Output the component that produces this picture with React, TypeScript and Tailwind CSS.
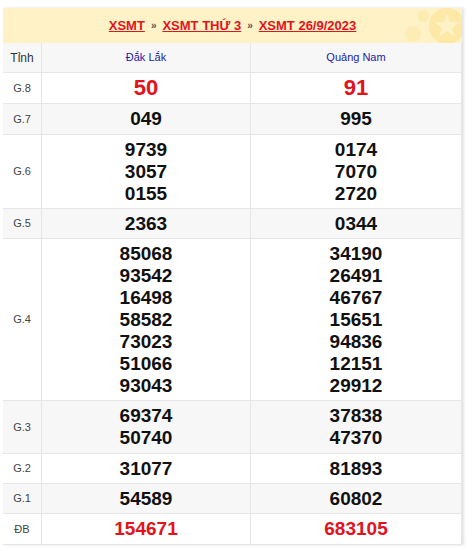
import React from "react"

type Row = { label: string; a: string[]; b: string[]; red?: boolean; big?: boolean; tall?: boolean }

const ROWS: Row[] = [
  { label: "G.8", a: ["50"], b: ["91"], red: true, big: true, tall: true },
  { label: "G.7", a: ["049"], b: ["995"], tall: true },
  { label: "G.6", a: ["9739", "3057", "0155"], b: ["0174", "7070", "2720"] },
  { label: "G.5", a: ["2363"], b: ["0344"] },
  {
    label: "G.4",
    a: ["85068", "93542", "16498", "58582", "73023", "51066", "93043"],
    b: ["34190", "26491", "46767", "15651", "94836", "12151", "29912"],
  },
  { label: "G.3", a: ["69374", "50740"], b: ["37838", "47370"], tall: true },
  { label: "G.2", a: ["31077"], b: ["81893"] },
  { label: "G.1", a: ["54589"], b: ["60802"] },
  { label: "ĐB", a: ["154671"], b: ["683105"], red: true, tall: true },
]

function Cell({ nums, red, big, tall }: { nums: string[]; red?: boolean; big?: boolean; tall?: boolean }) {
  return (
    <div
      className={
        "flex flex-col items-center justify-center border-l border-[#e6e6e6] pt-1 font-bold leading-[22px] " +
        (tall ? "pb-1 " : "pb-[3px] ") +
        (red ? "text-[#e3121b] " : "text-[#111] ") +
        (big ? "text-[22px]" : "text-[19px]")
      }
    >
      {nums.map((n, i) => (
        <span key={i}>{n}</span>
      ))}
    </div>
  )
}

function HeaderStar() {
  return (
    <svg className="absolute top-0 right-0" width="70" height="35" viewBox="0 0 70 35">
      <circle cx="55" cy="18" r="18" fill="#fde49a" opacity="0.75" />
      <polygon
        points="55,5 58,14 67,14 60,20 63,29 55,23 47,29 50,20 43,14 52,14"
        fill="#fff3cf"
        opacity="0.85"
      />
      <circle cx="31" cy="8" r="6" fill="#fde49a" opacity="0.45" />
      <circle cx="21" cy="26" r="8" fill="#fde49a" opacity="0.4" />
    </svg>
  )
}

export default function App() {
  return (
    <div
      className="h-[548px] w-[472px] bg-white pt-2 pl-[3px]"
      style={{ fontFamily: '"Liberation Sans", Arial, sans-serif' }}
    >
      <div className="w-[459px] bg-white shadow-[2px_0_3px_rgba(0,0,0,0.12)]">
        {/* Title bar */}
        <div className="relative flex h-[35px] items-center justify-center overflow-hidden bg-[#fef2c6] text-[13px] font-bold text-[#e3121b]">
          <HeaderStar />
          <span className="relative flex items-center gap-[6px]">
            <span className="underline">XSMT</span>
            <span className="text-[10px] text-[#555]">»</span>
            <span className="underline">XSMT THỨ 3</span>
            <span className="text-[10px] text-[#555]">»</span>
            <span className="underline">XSMT 26/9/2023</span>
          </span>
        </div>

        {/* Results table */}
        <div className="grid grid-cols-[38px_209px_1fr] border-r border-[#e6e6e6]">
          <div className="flex h-[29px] items-center justify-center bg-[#f7f7f7] text-[12px] text-[#333]">
            Tỉnh
          </div>
          <div className="flex items-center justify-center border-l border-[#e6e6e6] bg-[#f7f7f7] text-[11px] text-[#1c1ca8]">
            Đắk Lắk
          </div>
          <div className="flex items-center justify-center border-l border-[#e6e6e6] bg-[#f7f7f7] text-[11px] text-[#1c1ca8]">
            Quảng Nam
          </div>

          {ROWS.map((r, i) => {
            const bg = i % 2 === 1 ? "bg-[#f7f7f7]" : "bg-white"
            return (
              <div key={r.label} className={"col-span-3 grid grid-cols-subgrid border-t border-[#e6e6e6] " + bg}>
                <div className="flex items-center justify-center text-[11px] text-[#444]">{r.label}</div>
                <Cell nums={r.a} red={r.red} big={r.big} tall={r.tall} />
                <Cell nums={r.b} red={r.red} big={r.big} tall={r.tall} />
              </div>
            )
          })}
          <div className="col-span-3 border-t border-[#e6e6e6]" />
        </div>
      </div>
    </div>
  )
}
